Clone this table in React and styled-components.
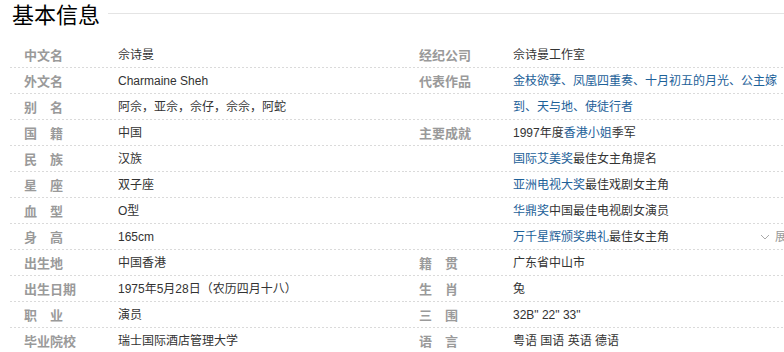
import styled, { createGlobalStyle } from "styled-components";

const GlobalStyle = createGlobalStyle`
  html, body {
    margin: 0;
    padding: 0;
    background: #fff;
    overflow: hidden;
  }
  body {
    width: 784px;
    font-family: "Liberation Sans", "Noto Sans CJK SC", Arial, sans-serif;
  }
`;

const LEFT_ROWS = [
  { label: "中文名", value: ["佘诗曼"] },
  { label: "外文名", value: ["Charmaine Sheh"] },
  { label: "别\u3000名", value: ["阿佘，亚佘，佘仔，佘佘，阿蛇"] },
  { label: "国\u3000籍", value: ["中国"] },
  { label: "民\u3000族", value: ["汉族"] },
  { label: "星\u3000座", value: ["双子座"] },
  { label: "血\u3000型", value: ["O型"] },
  { label: "身\u3000高", value: ["165cm"] },
  { label: "出生地", value: ["中国香港"] },
  { label: "出生日期", value: ["1975年5月28日（农历四月十八）"] },
  { label: "职\u3000业", value: ["演员"] },
  { label: "毕业院校", value: ["瑞士国际酒店管理大学"] },
];

const RIGHT_ROWS = [
  { label: "经纪公司", value: ["佘诗曼工作室"] },
  {
    label: "代表作品",
    value: [{ link: "金枝欲孽、凤凰四重奏、十月初五的月光、公主嫁到、天与地、使徒行者" }],
  },
  { label: "主要成就", value: ["1997年度", { link: "香港小姐" }, "季军"] },
  { label: "", value: [{ link: "国际艾美奖" }, "最佳女主角提名"] },
  { label: "", value: [{ link: "亚洲电视大奖" }, "最佳戏剧女主角"] },
  { label: "", value: [{ link: "华鼎奖" }, "中国最佳电视剧女演员"] },
  { label: "", value: [{ link: "万千星辉颁奖典礼" }, "最佳女主角"], expand: true },
  { label: "籍\u3000贯", value: ["广东省中山市"] },
  { label: "生\u3000肖", value: ["兔"] },
  { label: "三\u3000围", value: ['32B" 22" 33"'] },
  { label: "语\u3000言", value: ["粤语 国语 英语 德语"] },
];

function InfoColumn({ rows, width }) {
  return (
    <Column $width={width}>
      {rows.map((row, i) => (
        <Row key={i}>
          <Label>{row.label}</Label>
          <Value>
            {row.value.map((part, j) =>
              typeof part === "string" ? (
                <span key={j}>{part}</span>
              ) : (
                <Link key={j}>{part.link}</Link>
              )
            )}
          </Value>
          {row.expand && (
            <Expand>
              <svg width="10" height="6" viewBox="0 0 10 6">
                <path d="M1 1l4 4 4-4" fill="none" stroke="#aaa" strokeWidth="1" />
              </svg>
              <span>展开</span>
            </Expand>
          )}
        </Row>
      ))}
    </Column>
  );
}

export default function App() {
  return (
    <>
      <GlobalStyle />
      <Section>
        <Header>
          <Title>基本信息</Title>
          <HeaderLine />
        </Header>
        <Columns>
          <InfoColumn rows={LEFT_ROWS} width={395} />
          <InfoColumn rows={RIGHT_ROWS} width={379} />
        </Columns>
      </Section>
    </>
  );
}

const Section = styled.div`
  width: 784px;
`;

const Header = styled.div`
  display: flex;
  align-items: center;
  height: 26px;
  padding-left: 12px;
  margin-bottom: 16px;
`;

const Title = styled.h2`
  margin: 0;
  font-family: "Noto Sans CJK SC", sans-serif;
  font-size: 22px;
  font-weight: 400;
  line-height: 26px;
  color: #000;
  padding-right: 8px;
`;

const HeaderLine = styled.div`
  flex: 1;
  height: 1px;
  background: #e4e4e4;
`;

const Columns = styled.div`
  display: flex;
  padding-left: 10px;
`;

/* each 26px line gets a dotted rule at its bottom, wrapped lines included */
const Column = styled.div`
  width: ${(p) => p.$width}px;
  flex-shrink: 0;
  background-image: linear-gradient(to bottom, #fff 0 25px, transparent 25px),
    repeating-linear-gradient(to right, #dadada 0 2px, transparent 2px 4px);
  background-size: 100% 26px, 100% 26px;
`;

const Row = styled.div`
  position: relative;
  display: flex;
  line-height: 26px;
`;

const Label = styled.div`
  width: 94px;
  flex-shrink: 0;
  padding-left: 14px;
  font-family: "Noto Sans CJK SC", sans-serif;
  font-size: 13px;
  font-weight: 700;
  color: #9a9a9a;
  white-space: pre;
`;

const Value = styled.div`
  flex: 1;
  font-size: 12px;
  color: #333;
`;

const Link = styled.a`
  color: #1d6199;
  text-decoration: none;
  cursor: pointer;
`;

const Expand = styled.div`
  position: absolute;
  left: 355px;
  top: 0;
  display: flex;
  align-items: center;
  gap: 5px;
  font-size: 12px;
  color: #999;
  white-space: nowrap;
`;
